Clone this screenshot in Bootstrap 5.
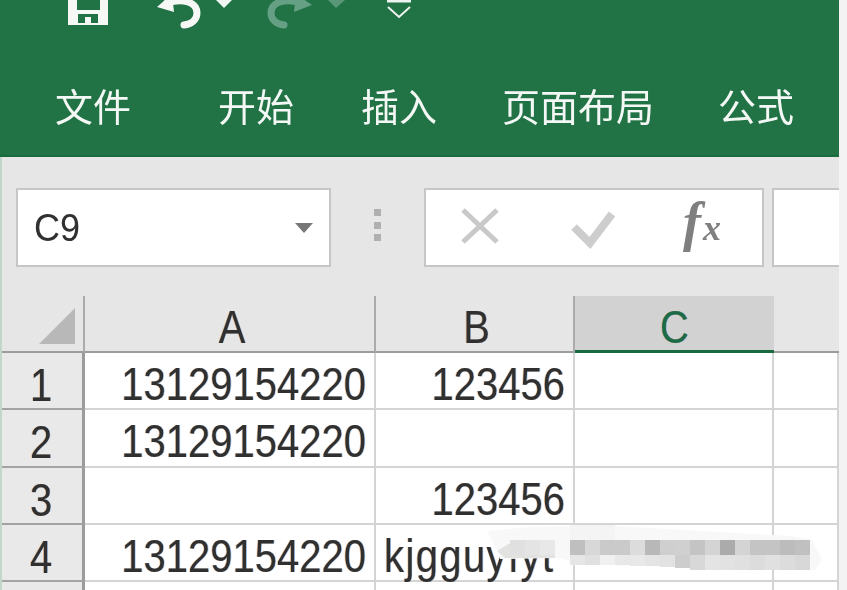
<!DOCTYPE html>
<html lang="zh"><head><meta charset="utf-8">
<link href="https://cdn.jsdelivr.net/npm/bootstrap@5.3.0/dist/css/bootstrap.min.css" rel="stylesheet">
<style>
html,body{height:590px;overflow:hidden;background:#f3f3f3;}
body{font-family:"Liberation Sans",sans-serif;color:#303030;}
.xl-app{width:839px;height:590px;overflow:hidden;position:relative;background:#fff;filter:blur(.55px);}
.xl-edge{position:absolute;left:0;top:157px;bottom:0;width:2px;background:#c3d6ca;}
.xl-ribbon{height:157px;background:#217346;border-bottom:2px solid #1a6b40;}
.xl-qat{height:74px;position:relative;}
.xl-qat svg{position:absolute;top:0;}
.xl-tabs{padding-left:55px;height:64px;font:38px/62px "Noto Sans CJK SC",sans-serif;color:#f4f8f5;}
.xl-tab{white-space:nowrap;}
.xl-fbar{height:139px;background:#e6e6e6;padding:31px 0 0 16px;}
.xl-box{height:79px;background:#fff;border:2px solid #c6c6c6;}
.xl-name{width:315px;padding-left:16px;line-height:76px;}
.xl-name b{font-weight:400;font-size:36px;display:inline-block;transform:scaleY(1.08);}
.xl-caret{width:0;height:0;border:9px solid transparent;border-top:10px solid #777;border-bottom:0;margin-right:16px;}
.xl-grip{width:93px;padding-top:21px;gap:5.5px;}
.xl-grip i{display:block;width:7px;height:7px;background:#b0b0b0;}
.xl-fx{width:340px;}
.xl-input{flex:1;margin-left:8px;border-right:0;}
.xl-sheet{display:grid;grid-template-columns:85px 291px 199px 199px 65px;grid-template-rows:57px 57px 58px 57px 57px 20px;}
.xl-hd{background:#e6e6e6;border-right:2px solid #ababab;border-bottom:2px solid #9c9c9c;line-height:54px;text-align:center;padding-top:2px;}
.xl-hd.xl-nb{border-right:0;}
.xl-sel{background:#d2d2d2;color:#1d6b46;border-bottom:3px solid #17693f;border-right:0;}
.xl-corner{position:relative;}
.xl-tri{position:absolute;right:8px;bottom:7px;width:0;height:0;border-style:solid;border-width:0 0 36px 36px;border-color:transparent transparent #b8b8b8 transparent;}
.xl-rh{background:#e9e9e9;border-right:3px solid #9c9c9c;border-bottom:2px solid #a3a3a3;line-height:54px;text-align:center;}
.xl-c{border-right:2px solid #d4d4d4;border-bottom:2px solid #d4d4d4;line-height:52px;text-align:right;padding:0 8px 0 0;white-space:nowrap;}
.xl-c.xl-l{text-align:left;padding:0 0 0 8px;letter-spacing:1.4px;}
.xl-t{display:inline-block;font-size:40px;transform:translateY(5px) scaleY(1.17);text-shadow:-.7px 0 rgba(225,120,20,.4),.7px 0 rgba(30,120,230,.4);}
.xl-hd .xl-t{transform:translateY(2px) scaleY(1.17);}
.xl-rh .xl-t{transform:translateY(5px) scaleY(1.17);}
.xl-a{padding-left:5px;}
.xl-b{padding-left:4px;}
.xl-smudge{position:absolute;left:0;top:0;}
</style></head><body>
<div class="xl-app">
  <div class="xl-ribbon">
    <div class="xl-qat">
      <svg style="left:67px" width="42" height="27" viewBox="0 0 42 27"><path d="M1 -12H33L41 -4V25H1Z" fill="#f6f8f6"/><rect x="10" y="-8" width="23" height="18" fill="#217346"/><path fill-rule="evenodd" d="M11 14H31V23H11ZM18 17H24V23H18Z" fill="#217346"/></svg>
      <svg style="left:155px" width="80" height="30" viewBox="0 0 80 30"><path d="M12 3C28 -2 42 2 42 13C42 20 36 24 29 25" fill="none" stroke="#f6f8f6" stroke-width="7" stroke-linecap="round"/><path d="M2 7L17 -6L19 12Z" fill="#f6f8f6"/><path d="M61 0H77L69 8Z" fill="#f1f5f2"/></svg>
      <svg style="left:266px" width="84" height="30" viewBox="0 0 84 30"><path d="M35 3C19 -2 5 2 5 13C5 20 11 24 18 25" fill="none" stroke="#66a084" stroke-width="7" stroke-linecap="round"/><path d="M46 5L30 -6L28 12Z" fill="#66a084"/><path d="M62 0H79L70 8Z" fill="#5a9779"/></svg>
      <svg style="left:385px" width="28" height="20" viewBox="0 0 28 20"><path d="M2 1H26" stroke="#eef4f0" stroke-width="3"/><path d="M3 7L14 17L25 7" fill="none" stroke="#eef4f0" stroke-width="2"/></svg>
    </div>
    <div class="xl-tabs d-flex">
      <span class="xl-tab" style="width:163px">文件</span><span class="xl-tab" style="width:143px">开始</span><span class="xl-tab" style="width:141px">插入</span><span class="xl-tab" style="width:216px">页面布局</span><span class="xl-tab">公式</span>
    </div>
  </div>
  <div class="xl-fbar d-flex align-items-start">
    <div class="xl-box xl-name d-flex justify-content-between align-items-center"><b>C9</b><span class="xl-caret"></span></div>
    <div class="xl-grip d-flex flex-column align-items-center"><i></i><i></i><i></i></div>
    <div class="xl-box xl-fx d-flex align-items-center">
      <svg width="336" height="75" viewBox="0 0 336 75"><path d="M37 20L71 52M71 20L37 52" stroke="#c9c9c9" stroke-width="5" fill="none"/><path d="M148 37L164 53L186 24" stroke="#cdcdcd" stroke-width="8" fill="none"/><text x="257" y="50" font-family="Liberation Serif" font-style="italic" font-weight="700" font-size="54" fill="#7f7f7f">f</text><text x="277" y="50" font-family="Liberation Serif" font-style="italic" font-weight="700" font-size="36" fill="#7f7f7f">x</text></svg>
    </div>
    <div class="xl-box xl-input"></div>
  </div>
  <div class="xl-sheet">
    <div class="xl-hd xl-corner"><span class="xl-tri"></span></div><div class="xl-hd xl-a"><span class="xl-t">A</span></div><div class="xl-hd xl-b"><span class="xl-t">B</span></div><div class="xl-hd xl-sel"><span class="xl-t">C</span></div><div class="xl-hd xl-nb"></div>
    <div class="xl-rh"><span class="xl-t">1</span></div><div class="xl-c"><span class="xl-t">13129154220</span></div><div class="xl-c"><span class="xl-t">123456</span></div><div class="xl-c"></div><div class="xl-c"></div>
    <div class="xl-rh"><span class="xl-t">2</span></div><div class="xl-c"><span class="xl-t">13129154220</span></div><div class="xl-c"></div><div class="xl-c"></div><div class="xl-c"></div>
    <div class="xl-rh"><span class="xl-t">3</span></div><div class="xl-c"></div><div class="xl-c"><span class="xl-t">123456</span></div><div class="xl-c"></div><div class="xl-c"></div>
    <div class="xl-rh"><span class="xl-t">4</span></div><div class="xl-c"><span class="xl-t">13129154220</span></div><div class="xl-c xl-l"><span class="xl-t">kjgguyfyt</span></div><div class="xl-c"></div><div class="xl-c"></div>
    <div class="xl-rh"></div><div class="xl-c"></div><div class="xl-c"></div><div class="xl-c"></div><div class="xl-c"></div>
  </div>
  <span class="xl-edge"></span>
  <svg class="xl-smudge" width="839" height="590" viewBox="0 0 839 590">
    <path d="M487 531L530 527L600 525L700 531L790 536L812 540L822 560L815 570L700 569L680 567L600 565L555 558L500 559L496 548Z" fill="#f8f8f8"/>
    <g fill="#e2e2e0"><path d="M497 551L510 543H555V558H505Z"/></g>
    <rect x="510" y="540" width="15" height="15" fill="#e0e0e0"/><rect x="525" y="540" width="15" height="15" fill="#e4e4e4"/><rect x="540" y="540" width="15" height="15" fill="#e8e8e8"/>
    <rect x="570" y="540" width="15" height="15" fill="#bfbfbf"/><rect x="585" y="540" width="15" height="15" fill="#d8d8d8"/><rect x="600" y="540" width="15" height="15" fill="#cacaca"/><rect x="615" y="540" width="15" height="15" fill="#cacaca"/><rect x="630" y="540" width="15" height="15" fill="#dcdcdc"/><rect x="645" y="540" width="15" height="15" fill="#b8b8b8"/><rect x="660" y="540" width="15" height="15" fill="#cfcfcf"/><rect x="675" y="540" width="15" height="15" fill="#d0d0d0"/><rect x="690" y="540" width="15" height="15" fill="#c4c4c4"/><rect x="705" y="540" width="15" height="15" fill="#d4d4d4"/><rect x="720" y="540" width="15" height="15" fill="#ababab"/><rect x="735" y="540" width="15" height="15" fill="#d4d4d4"/><rect x="750" y="540" width="15" height="15" fill="#c4c4c4"/><rect x="765" y="540" width="15" height="15" fill="#c4c4c4"/><rect x="780" y="540" width="15" height="15" fill="#bcbcbc"/><rect x="795" y="540" width="15" height="15" fill="#c0c0c0"/>
    <rect x="570" y="555" width="15" height="10" fill="#e6e6e6"/><rect x="585" y="555" width="15" height="10" fill="#e0e0e0"/><rect x="600" y="555" width="15" height="10" fill="#f0f0f0"/><rect x="615" y="555" width="15" height="10" fill="#e8e8e8"/><rect x="630" y="555" width="15" height="11" fill="#e8e8e8"/><rect x="645" y="555" width="15" height="11" fill="#e4e4e4"/><rect x="660" y="555" width="15" height="12" fill="#e2e2e2"/><rect x="675" y="555" width="15" height="13" fill="#cdcdcd"/><rect x="690" y="555" width="15" height="15" fill="#d8d8d8"/><rect x="705" y="555" width="15" height="15" fill="#e4e4e4"/><rect x="720" y="555" width="15" height="15" fill="#e2e2e2"/><rect x="735" y="555" width="15" height="15" fill="#e0e0e0"/><rect x="750" y="555" width="15" height="15" fill="#dcdcdc"/><rect x="765" y="555" width="15" height="15" fill="#e0e0e0"/><rect x="780" y="555" width="15" height="15" fill="#dcdcdc"/><rect x="795" y="555" width="15" height="15" fill="#d8d8d8"/>
    <rect x="570" y="525" width="45" height="15" fill="#f4f4f4"/>
  </svg>
</div>
</body></html>
